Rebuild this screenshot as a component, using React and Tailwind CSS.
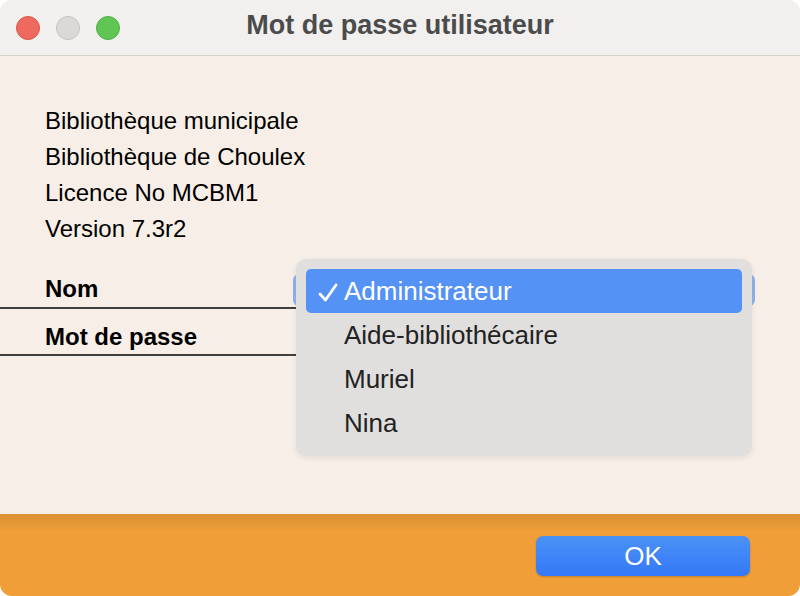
import React from "react";

export default function App() {
  const font = { fontFamily: '"Liberation Sans", Arial, sans-serif' };
  return (
    <div className="w-[800px] h-[596px] bg-white" style={font}>
      <div className="w-full h-full rounded-[12px] overflow-hidden flex flex-col bg-[#f7efe7]">
        {/* Title bar */}
        <div className="relative h-[56px] shrink-0 bg-[#f1f0ef] border-b border-[#d9d2ca] flex items-center justify-center pb-[6px]">
          <div className="absolute left-[16px] top-[16px] flex gap-[16px]">
            <div className="w-[24px] h-[24px] rounded-full bg-[#ee6a5f] border border-[#d9574c]" />
            <div className="w-[24px] h-[24px] rounded-full bg-[#dad9d8] border border-[#c3c2c1]" />
            <div className="w-[24px] h-[24px] rounded-full bg-[#61c554] border border-[#52ad47]" />
          </div>
          <div className="text-[27px] font-bold text-[#4b4b4b] leading-[30px]">Mot de passe utilisateur</div>
        </div>

        {/* Content */}
        <div className="flex-1 relative">
          <div className="pt-[47px] pl-[45px] flex flex-col text-[24px] text-black leading-[36px]">
            <div>Bibliothèque municipale</div>
            <div>Bibliothèque de Choulex</div>
            <div>Licence No MCBM1</div>
            <div>Version 7.3r2</div>
          </div>

          <div className="w-[296px]">
            <div className="h-[62px] border-b-2 border-[#3f3f3f] pl-[45px] flex items-end pb-[6px]">
              <span className="text-[24px] font-bold leading-[24px]">Nom</span>
            </div>
            <div className="h-[47px] border-b-2 border-[#3f3f3f] pl-[45px] flex items-end pb-[5px]">
              <span className="text-[24px] font-bold leading-[24px]">Mot de passe</span>
            </div>
          </div>

          {/* Underlying popup button */}
          <div className="absolute left-[293px] top-[218px] w-[462px] h-[32px] rounded-[6px] bg-[#8fb3ef]" />

          {/* Dropdown menu */}
          <div className="absolute left-[296px] top-[203px] w-[456px] h-[197px] rounded-[10px] bg-[#e0dfde] shadow-[0_2px_6px_rgba(0,0,0,0.08)] p-[10px] flex flex-col">
            <div className="h-[44px] rounded-[5px] bg-[#5592f5] flex items-center text-white text-[26px]">
              <span className="w-[38px] pl-[11px] leading-none">
                <svg width="22" height="22" viewBox="0 0 22 22" className="mt-[4px]">
                  <path d="M3 12 L8.5 18 L19 3" fill="none" stroke="white" strokeWidth="2.8" strokeLinecap="round" strokeLinejoin="round" />
                </svg>
              </span>
              <span>Administrateur</span>
            </div>
            <div className="h-[44px] flex items-center pl-[38px] text-[26px] text-[#222]">Aide-bibliothécaire</div>
            <div className="h-[44px] flex items-center pl-[38px] text-[26px] text-[#222]">Muriel</div>
            <div className="h-[44px] flex items-center pl-[38px] text-[26px] text-[#222]">Nina</div>
          </div>
        </div>

        {/* Footer */}
        <div className="h-[82px] shrink-0 bg-[linear-gradient(to_bottom,#dc9132_0px,#e89a37_12px,#f09e38_18px,#f09e38_100%)] flex items-start justify-end pr-[50px] pt-[22px]">
          <div className="w-[214px] h-[40px] rounded-[7px] bg-[linear-gradient(to_bottom,#4b92f6,#3478f6)] shadow-[0_1px_2px_rgba(0,0,0,0.2)] flex items-center justify-center text-white text-[26px]">
            OK
          </div>
        </div>
      </div>
    </div>
  );
}
